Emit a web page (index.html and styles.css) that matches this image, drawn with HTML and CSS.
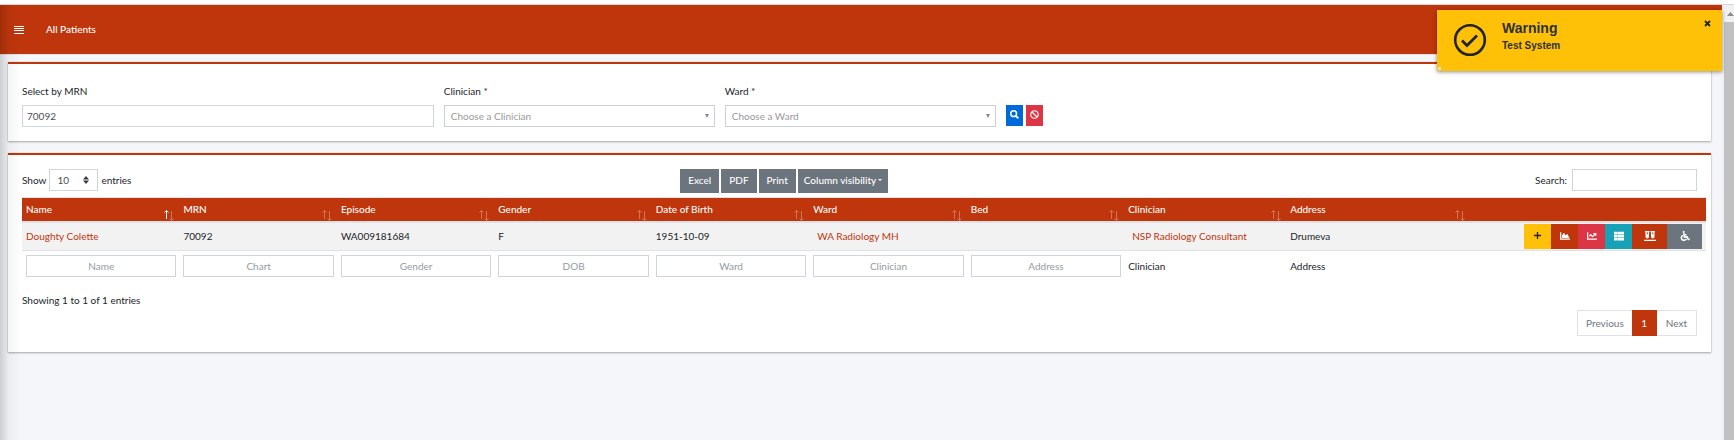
FILE: index.html
```html
<!DOCTYPE html>
<html lang="en">
<head>
<meta charset="utf-8">
<title>All Patients</title>
<link rel="stylesheet" href="styles.css">
</head>
<body>
<svg class="sprite" aria-hidden="true">
  <symbol id="up" viewBox="0 0 5 12"><path d="M2.500 10V1.500M0.500 3.500l2-2 2 2" fill="none" stroke="currentColor"/></symbol>
  <symbol id="down" viewBox="0 0 5 12"><path d="M2.500 2v9M0.500 9.500l2 2 2-2" fill="none" stroke="currentColor"/></symbol>
</svg>
<div class="window">
  <div class="page">
    <nav class="navbar">
      <button class="menu" type="button" aria-label="Menu">
        <svg viewBox="0 0 10 8" width="10" height="8" shape-rendering="crispEdges"><path d="M0 .5h10M0 2.500h10M0 4.500h10M0 7h10" stroke="#fff" stroke-width="1"/></svg>
      </button>
      <span class="title">All Patients</span>
    </nav>
    <main>
      <form class="card filters">
        <div class="field mrn">
          <label for="mrn">Select by MRN</label>
          <input id="mrn" class="box" type="text" value="70092">
        </div>
        <div class="field pick">
          <label for="clinician">Clinician *</label>
          <div class="choice"><select id="clinician" class="box"><option>Choose a Clinician</option></select></div>
        </div>
        <div class="field pick">
          <label for="ward">Ward *</label>
          <div class="choice"><select id="ward" class="box"><option>Choose a Ward</option></select></div>
        </div>
        <div class="go">
          <button class="blue" type="button" aria-label="Search"><svg viewBox="0 0 512 512" width="9" height="9"><circle cx="208" cy="208" r="165" fill="none" stroke="#fff" stroke-width="86"/><path d="M330 330L475 475" stroke="#fff" stroke-width="100"/></svg></button>
          <button class="red" type="button" aria-label="Clear"><svg viewBox="0 0 512 512" width="9" height="9"><path fill="#fff" d="M256 8C119 8 8 119 8 256s111 248 248 248 248-111 248-248S393 8 256 8zm130 118c65 65 70 165 21 236L150 105c70-49 170-45 236 21zM126 386c-65-65-70-165-21-236l257 257c-71 49-171 45-236-21z"/></svg></button>
        </div>
      </form>

      <section class="card list">
        <div class="tools">
          <div class="length">
            <label for="len">Show</label>
            <div class="count"><select id="len" class="box"><option>10</option></select><svg viewBox="0 0 6 8" width="6" height="8"><path d="M3 0l3 3.500H0zM3 8l3-3.500H0z" fill="#343a40"/></svg></div>
            <span>entries</span>
          </div>
          <div class="exports">
            <button type="button">Excel</button>
            <button type="button">PDF</button>
            <button type="button">Print</button>
            <button type="button" class="cols">Column visibility</button>
          </div>
          <div class="search">
            <label for="q">Search:</label>
            <input id="q" class="box" type="search">
          </div>
        </div>

        <table>
          <colgroup>
            <col class="std" span="7"><col class="clin"><col class="addr"><col>
          </colgroup>
          <thead>
            <tr>
              <th class="sorted"><div>Name<span><svg><use href="#up"/></svg><svg><use href="#down"/></svg></span></div></th>
              <th><div>MRN<span><svg><use href="#up"/></svg><svg><use href="#down"/></svg></span></div></th>
              <th><div>Episode<span><svg><use href="#up"/></svg><svg><use href="#down"/></svg></span></div></th>
              <th><div>Gender<span><svg><use href="#up"/></svg><svg><use href="#down"/></svg></span></div></th>
              <th><div>Date of Birth<span><svg><use href="#up"/></svg><svg><use href="#down"/></svg></span></div></th>
              <th><div>Ward<span><svg><use href="#up"/></svg><svg><use href="#down"/></svg></span></div></th>
              <th><div>Bed<span><svg><use href="#up"/></svg><svg><use href="#down"/></svg></span></div></th>
              <th><div>Clinician<span><svg><use href="#up"/></svg><svg><use href="#down"/></svg></span></div></th>
              <th><div>Address<span><svg><use href="#up"/></svg><svg><use href="#down"/></svg></span></div></th>
              <th></th>
            </tr>
          </thead>
          <tbody>
            <tr>
              <td><a href="#">Doughty Colette</a></td>
              <td>70092</td>
              <td>WA009181684</td>
              <td>F</td>
              <td>1951-10-09</td>
              <td><a class="inset" href="#">WA Radiology MH</a></td>
              <td></td>
              <td><a class="inset" href="#">NSP Radiology Consultant</a></td>
              <td>Drumeva</td>
              <td>
                <div class="actions">
                  <button class="yellow" type="button" aria-label="Add"><svg viewBox="0 0 10 10" width="9" height="9"><path d="M5 1v8M1 5h8" stroke="#212529" stroke-width="1.500"/></svg></button>
                  <button class="brand" type="button" aria-label="Area chart"><svg viewBox="0 0 512 512" width="10" height="10"><path fill="#fff" d="M500 384c7 0 12 5 12 12v40c0 7-5 12-12 12H12c-7 0-12-5-12-12V76c0-7 5-12 12-12h40c7 0 12 5 12 12v308zM373 160l-85 56-85-114c-5-7-16-6-20 1L96 248v104h384l-90-188c-3-6-11-8-17-4z"/></svg></button>
                  <button class="red" type="button" aria-label="Line chart"><svg viewBox="0 0 512 512" width="10" height="10"><path fill="#fff" d="M496 384H64V80c0-9-7-16-16-16H16C7 64 0 71 0 80v336c0 18 14 32 32 32h464c9 0 16-7 16-16v-32c0-9-7-16-16-16zM464 96H346c-21 0-32 26-17 41l32 32-73 74-73-74c-13-12-33-12-46 0l-68 69c-6 6-6 16 0 23l22 22c7 6 17 6 23 0l46-46 73 74c13 12 33 12 46 0l96-96 32 32c15 15 41 4 41-17V112c0-9-7-16-16-16z"/></svg></button>
                  <button class="teal" type="button" aria-label="List"><svg viewBox="0 0 512 512" width="10" height="10"><path fill="#fff" d="M0 32h150v140H0zM168 32h344v140H168zM0 186h150v140H0zM168 186h344v140H168zM0 340h150v140H0zM168 340h344v140H168z"/></svg></button>
                  <button class="brand wide" type="button" aria-label="Samples"><svg viewBox="0 0 12 10" width="12" height="10"><path fill="#fff" d="M1 0h4.500v1.200H5V6a1.800 1.800 0 0 1-3.500 0V1.200H1zM6.500 0H11v1.200h-.5V6A1.800 1.800 0 0 1 7 6V1.200h-.5zM0 8.700h12V10H0z"/><path d="M2.800 1.200h1v2h-1zM8.300 1.200h1v2h-1z" fill="#bf360c"/></svg></button>
                  <button class="gray wide" type="button" aria-label="Accessibility"><svg viewBox="0 0 512 512" width="10" height="10"><circle cx="190" cy="52" r="54" fill="#fff"/><path d="M195 110l22 190h145l65 140 65-28M205 190h130M140 225a132 132 0 1 0 182 170" fill="none" stroke="#fff" stroke-width="80"/></svg></button>
                </div>
              </td>
            </tr>
          </tbody>
          <tfoot>
            <tr>
              <td><input class="box" type="text" placeholder="Name" aria-label="Name"></td>
              <td><input class="box" type="text" placeholder="Chart" aria-label="Chart"></td>
              <td><input class="box" type="text" placeholder="Gender" aria-label="Gender"></td>
              <td><input class="box" type="text" placeholder="DOB" aria-label="DOB"></td>
              <td><input class="box" type="text" placeholder="Ward" aria-label="Ward"></td>
              <td><input class="box" type="text" placeholder="Clinician" aria-label="Clinician"></td>
              <td><input class="box" type="text" placeholder="Address" aria-label="Address"></td>
              <td>Clinician</td>
              <td>Address</td>
              <td></td>
            </tr>
          </tfoot>
        </table>

        <p class="info">Showing 1 to 1 of 1 entries</p>
        <div class="pager">
          <button type="button">Previous</button>
          <button type="button" class="current">1</button>
          <button type="button">Next</button>
        </div>
      </section>
    </main>
    <div class="edge"></div>
    <aside class="toast" role="alert">
      <svg viewBox="0 0 34 34" width="34" height="34"><circle cx="17" cy="17" r="14.800" fill="none" stroke="#212529" stroke-width="2.600"/><path d="M9 17.500l5 5L24 12.500" fill="none" stroke="#212529" stroke-width="2.800"/></svg>
      <div class="message">
        <strong>Warning</strong>
        <span>Test System</span>
      </div>
      <button type="button" aria-label="Close"><svg viewBox="0 0 7 7" width="7" height="7"><path d="M1 1l5 5M6 1L1 6" stroke="#212529" stroke-width="1.800"/></svg></button>
      <i class="grip"></i>
    </aside>
  </div>
  <div class="scrollbar"><svg viewBox="0 0 10 17" width="10" height="17"><path d="M3 11l3.500-4 3.500 4z" fill="#8b8b8b"/></svg><div class="thumb"></div></div>
</div>
</body>
</html>
```
FILE: styles.css
```css
* { box-sizing: border-box; }

body {
  margin: 0;
  padding-top: 4px;
  background: #fff;
  color: #212529;
  font: 10px/15px Lato, "Noto Sans", sans-serif;
}

button, input, select { font: inherit; color: inherit; margin: 0; border-radius: 0; }
button { border: 0; padding: 0; background: none; display: flex; align-items: center; justify-content: center; }
svg { display: block; flex: none; }
a { color: #bf360c; text-decoration: none; }

.sprite { position: absolute; width: 0; height: 0; }

.window { display: flex; min-height: calc(100vh - 4px); border-top: 1px solid #d6d6d6; }
.page { position: relative; flex: 1; min-width: 0; background: #f4f6f9; }

.navbar {
  display: flex;
  align-items: center;
  gap: 22px;
  height: 50px;
  padding: 0 14px;
  background: #bf360c;
  border-bottom: 1px solid #dee2e6;
  color: #fff;
}
.title { font-weight: 500; }

main { display: flex; flex-direction: column; gap: 12px; padding: 7px 11px 24px 8px; }

.card {
  background: #fff;
  border-top: 2px solid #bf360c;
  box-shadow: 0 0 1px rgba(0, 0, 0, .2), 0 1px 2px rgba(0, 0, 0, .3);
}

.box {
  appearance: none;
  width: 100%;
  height: 22px;
  padding: 0 4px;
  border: 1px solid #ced4da;
  background: #fff;
  color: #495057;
  outline: 0;
}

.filters { display: flex; align-items: flex-end; gap: 10px; padding: 20px 14px 14px; }
.field label { display: block; margin-bottom: 6px; }
.mrn { flex: 0 0 24.580%; }
.pick { flex: 0 0 16.180%; }
.choice, .count { position: relative; }
.choice .box { padding: 0 6px; color: #999; border-color: #ccd0d4; }
.choice::after {
  content: "";
  position: absolute;
  top: 9px;
  right: 6px;
  border: 2px solid transparent;
  border-top: 4px solid #888;
  border-bottom: 0;
}
.go { display: flex; gap: 3px; padding-bottom: 1px; }
.go button { width: 17px; height: 21px; padding-bottom: 2px; }

.blue { background: #0069d9; }
.red { background: #dc3545; }
.yellow { background: #ffc107; }
.brand { background: #bf360c; }
.teal { background: #17a2b8; }
.gray { background: #6c757d; }

.list { padding: 14px 14px 16px; }
.tools { display: grid; grid-template-columns: 39.300% auto 1fr; align-items: start; height: 28px; }
.length, .search { display: flex; align-items: center; gap: 3px; }
.search { justify-content: flex-end; gap: 5px; }
.search .box { width: 125px; }
.count { width: 49px; }
.count .box { padding: 0 7px; }
.count svg { position: absolute; right: 9px; top: 7px; }
.exports { display: flex; gap: 2px; }
.exports button { height: 24px; padding: 0 8px 2px; background: #6c757d; color: #fff; font-weight: 500; }
.exports .cols { padding: 0 6px 2px; }
.cols::after { content: ""; margin-left: 2px; border: 2px solid transparent; border-top-color: #fff; border-bottom: 0; }

table { width: calc(100% + 9px); table-layout: fixed; border-collapse: separate; border-spacing: 0; }
.std { width: 9.350%; }
.clin { width: 9.620%; }
.addr { width: 10.900%; }
th, td { padding: 0 3px 0 4px; text-align: left; white-space: nowrap; }
th {
  height: 26px;
  background: #bf360c;
  border-top: 1px solid #dee2e6;
  border-bottom: 2px solid #dee2e6;
  color: #fff;
  font-weight: 500;
}
th div { display: flex; justify-content: space-between; height: 23px; padding: 4px 2px 0 0; }
th span { display: flex; margin-top: 7px; }
th svg { width: 5px; height: 12px; opacity: .3; }
th.sorted svg:first-child { opacity: 1; }
tbody td { height: 28px; background: #f2f2f2; border-bottom: 1px solid #dee2e6; }
.inset { padding-left: 4px; }
.actions { display: flex; justify-content: flex-end; padding-right: 1px; }
.actions button { flex: 0 0 27px; height: 25px; padding-bottom: 2px; }
.actions .wide { flex-basis: 35px; }
tfoot td { height: 30px; }
tfoot .box { display: block; text-align: center; }
tfoot .box::placeholder { color: #939ba2; opacity: 1; }

.info { margin: 12px 0 2px; }
.pager { display: flex; justify-content: flex-end; }
.pager button { height: 26px; padding: 0 8px; border: 1px solid #dee2e6; color: #6c757d; background: #fff; }
.pager .current { width: 25px; border-color: #bf360c; background: #bf360c; color: #fff; }
.pager button:first-child { border-right: 0; }
.pager button:last-child { border-left: 0; padding: 0 9px; }

.edge {
  position: absolute;
  inset: 0 auto 0 0;
  width: 22px;
  background: linear-gradient(to right, rgba(0, 0, 0, .16), rgba(0, 0, 0, .04) 40%, transparent);
  pointer-events: none;
}

.toast {
  position: absolute;
  top: 5px;
  right: 0;
  display: flex;
  align-items: flex-start;
  width: 285px;
  height: 61px;
  padding: 13px 11px 0 16px;
  background: #ffc107;
  box-shadow: 0 1px 4px rgba(0, 0, 0, .45);
  font-family: "Liberation Sans", Arial, sans-serif;
  font-weight: 700;
  color: #2b3035;
}
.message { display: flex; flex-direction: column; flex: 1; margin-left: 15px; }
.message strong { font-size: 14px; line-height: 16px; margin-top: -3px; }
.message span { font-size: 10px; line-height: 20px; }
.toast button { margin-top: -3px; }
.grip { position: absolute; left: 1px; bottom: 1px; width: 3px; height: 3px; background: #f4e9c4; }

.scrollbar { display: flex; flex-direction: column; flex: 0 0 12px; padding-left: 2px; background: #f1f1f1; }
.thumb { flex: 1; background: #c1c1c1; }
```
